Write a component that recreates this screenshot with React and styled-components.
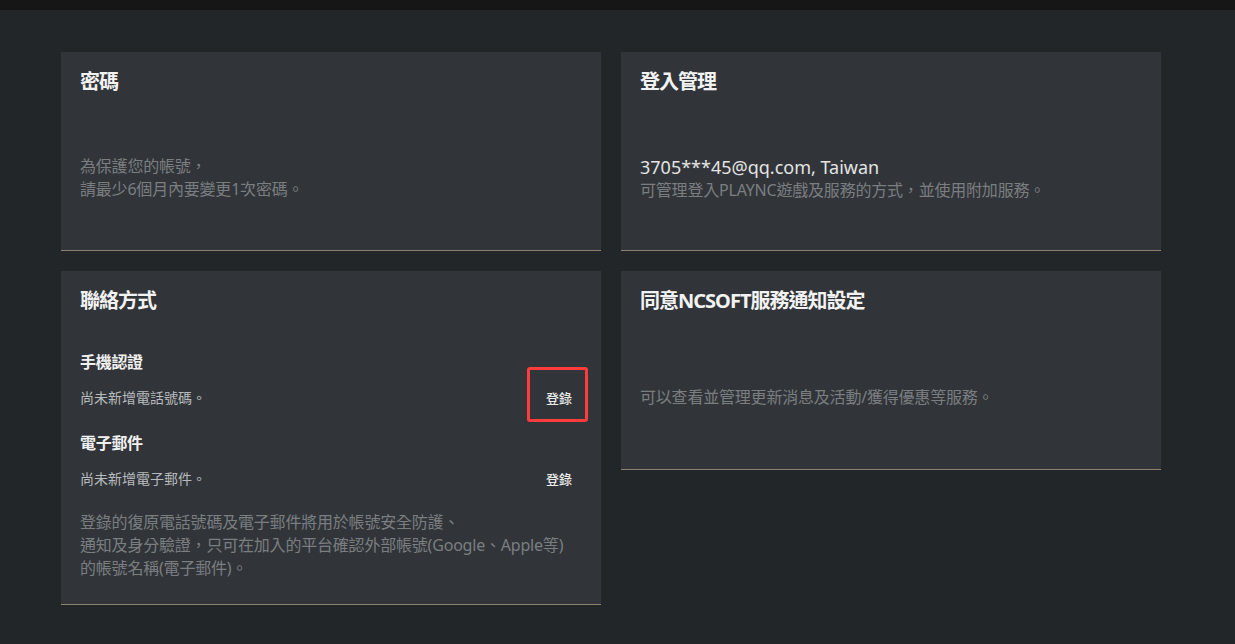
import React from 'react';
import styled, { createGlobalStyle } from 'styled-components';

const GlobalStyle = createGlobalStyle`
  * { box-sizing: border-box; }
  html, body {
    margin: 0;
    padding: 0;
    min-height: 100%;
    background: #232629;
  }
  body {
    font-family: "Noto Sans", "Noto Sans CJK TC", sans-serif;
    color: #e6e6e6;
  }
`;

const Page = styled.div`
  min-height: 100vh;
  background: #232629;
`;

const TopBar = styled.div`
  height: 10px;
  background: #161616;
`;

const Grid = styled.div`
  display: grid;
  grid-template-columns: 540px 540px;
  gap: 20px;
  align-items: start;
  padding: 42px 0 40px 61px;
`;

const Card = styled.section`
  display: flex;
  flex-direction: column;
  background: #313539;
  border-bottom: 1px solid #8a826f;
  padding: 18px 19px 8px;
`;

const Title = styled.h2`
  margin: 0;
  font-size: 20px;
  line-height: 24px;
  font-weight: 700;
  letter-spacing: -1px;
  color: #f2f2f2;
`;

const Body = styled.div`
  display: flex;
  flex-direction: column;
  justify-content: center;
  margin-top: 20px;
  min-height: 128px;
`;

const Desc = styled.p`
  margin: ${(p) => p.$mt || 0}px 0 ${(p) => p.$mb || 0}px;
  font-size: 16px;
  line-height: 23px;
  letter-spacing: -0.2px;
  color: #7b7e81;
`;

const Account = styled.div`
  font-size: 18px;
  line-height: 24px;
  color: #e4e4e4;
`;

const SubTitle = styled.h3`
  margin: ${(p) => p.$mt}px 0 0;
  font-size: 16px;
  line-height: 22px;
  font-weight: 700;
  letter-spacing: -0.3px;
  color: #f0f0f0;
`;

const Row = styled.div`
  display: flex;
  align-items: center;
  justify-content: space-between;
  height: 48px;
`;

const Status = styled.span`
  font-size: 14px;
  color: #b8bbbe;
`;

const RegisterButton = styled.button`
  position: relative;
  height: 48px;
  padding: 0 10px;
  border: none;
  background: transparent;
  font-family: inherit;
  font-size: 13px;
  font-weight: 500;
  color: #ececec;
  cursor: pointer;
`;

// red annotation frame drawn over the first button
const Highlight = styled.span`
  position: absolute;
  top: -6px;
  right: -6px;
  bottom: -1px;
  left: -9px;
  border: 3px solid #ff3b3b;
  border-radius: 3px;
  pointer-events: none;
`;

const App = () => {
  return (
    <>
      <GlobalStyle />
      <Page>
        <TopBar />
        <Grid>
          <Card>
            <Title>密碼</Title>
            <Body>
              <Desc>
                為保護您的帳號，
                <br />
                請最少6個月內要變更1次密碼。
              </Desc>
            </Body>
          </Card>

          <Card>
            <Title>登入管理</Title>
            <Body>
              <Account>3705***45@qq.com, Taiwan</Account>
              <Desc>可管理登入PLAYNC遊戲及服務的方式，並使用附加服務。</Desc>
            </Body>
          </Card>

          <Card>
            <Title>聯絡方式</Title>
            <SubTitle $mt={38}>手機認證</SubTitle>
            <Row>
              <Status>尚未新增電話號碼。</Status>
              <RegisterButton>
                登錄
                <Highlight />
              </RegisterButton>
            </Row>
            <SubTitle $mt={11}>電子郵件</SubTitle>
            <Row>
              <Status>尚未新增電子郵件。</Status>
              <RegisterButton>登錄</RegisterButton>
            </Row>
            <Desc $mt={9} $mb={16}>
              登錄的復原電話號碼及電子郵件將用於帳號安全防護、
              <br />
              通知及身分驗證，只可在加入的平台確認外部帳號(Google、Apple等)
              <br />
              的帳號名稱(電子郵件)。
            </Desc>
          </Card>

          <Card>
            <Title>同意NCSOFT服務通知設定</Title>
            <Body>
              <Desc>可以查看並管理更新消息及活動/獲得優惠等服務。</Desc>
            </Body>
          </Card>
        </Grid>
      </Page>
    </>
  );
};

export default App;
